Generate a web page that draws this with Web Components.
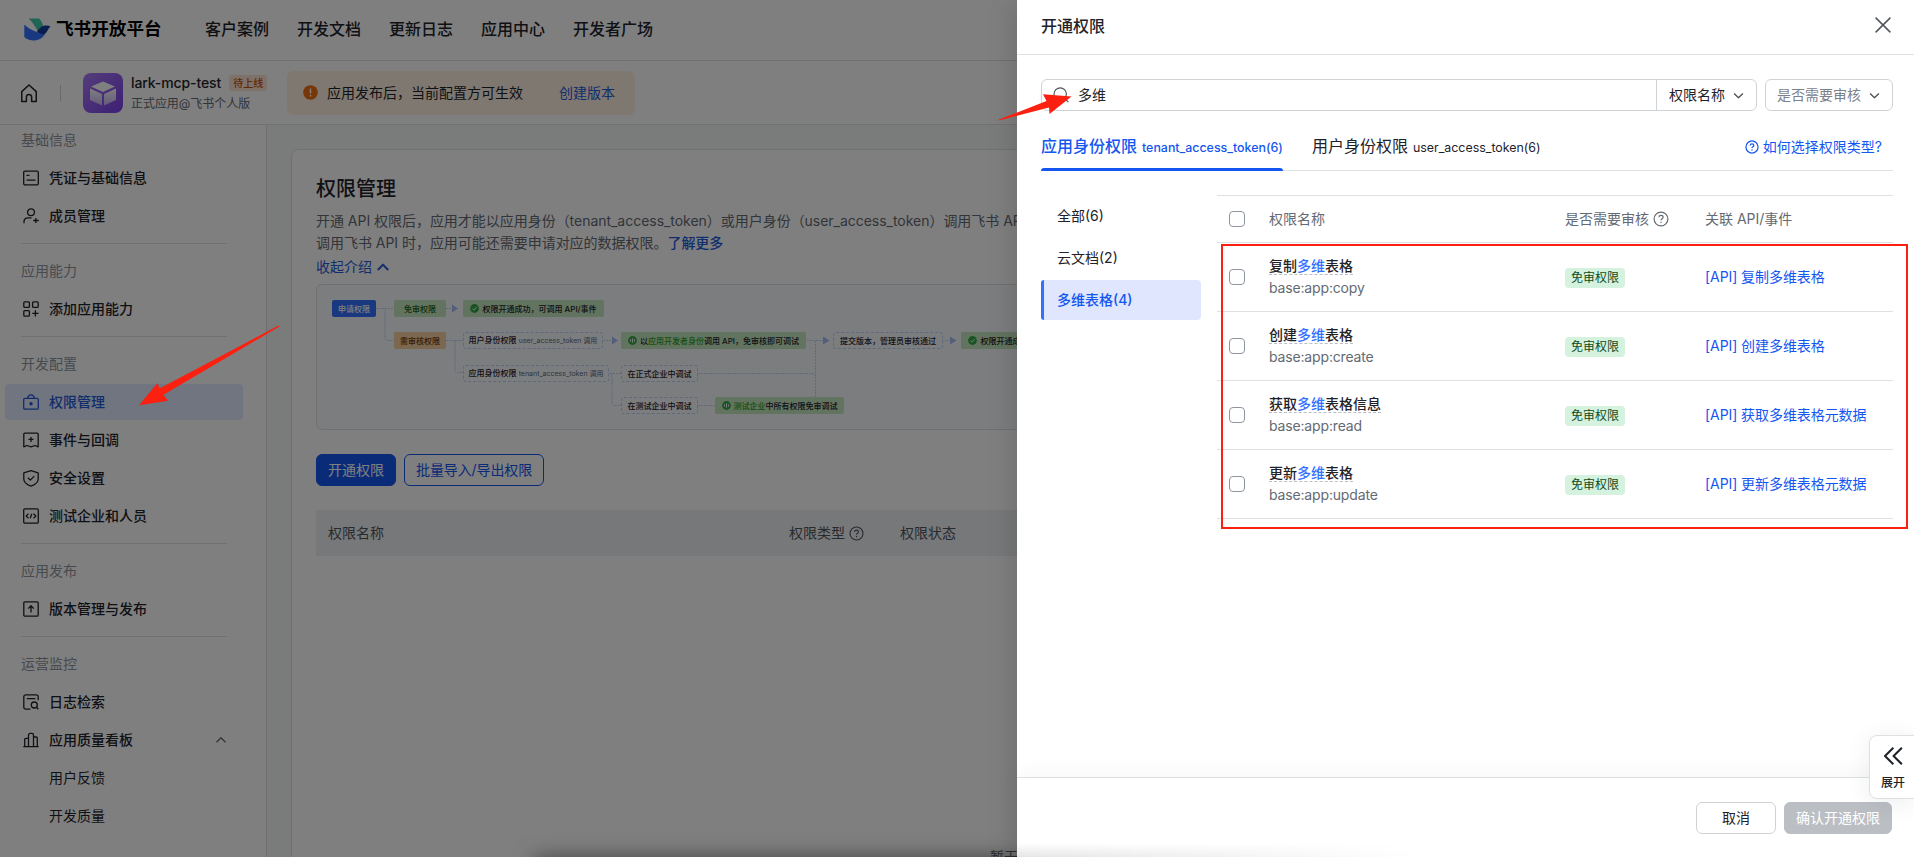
<!DOCTYPE html>
<html lang="zh-CN">
<head>
<meta charset="utf-8">
<title>飞书开放平台</title>
<style>
    html, body {
        margin: 0;
        padding: 0;
        width: 1914px;
        height: 857px;
        overflow: hidden;
        background: #fff;
        font-family: Inter, "Noto Sans CJK SC", sans-serif;
        font-size: 14px;
        line-height: 22px;
        color: #1f2329;
    }
</style>
</head>
<body>
<dev-console></dev-console>
<perm-drawer></perm-drawer>
<mark-arrows></mark-arrows>

<script>
const ICONS = {
    home: `<path d="M2.2 6.9 8 1.6l5.800 5.300v7.900h-3.700v-3.600a2.100 2.100 0 0 0-4.200 0v3.600H2.200z"/>`,
    card: `<rect x=".7" y="1.2" width="14.600" height="13.600" rx="1.200"/><path d="M3.500 5.300h3M3.500 10.200h9"/>`,
    member: `<circle cx="8" cy="4.200" r="3.400"/><path d="M1 15.300v-1.500c0-2.500 1.700-4 4-4h3.500M12.800 10v5M10.300 12.500h5.400"/>`,
    apps: `<rect x=".8" y=".8" width="5.600" height="5.600" rx="1"/><rect x="9.600" y=".8" width="5.600" height="5.600" rx="1"/><rect x=".8" y="9.600" width="5.600" height="5.600" rx="1"/><path d="M12.400 9.300v6.200M9.300 12.400h6.200"/>`,
    lock: `<rect x=".7" y="4.300" width="14.600" height="10.800" rx="1.200"/><path d="M4.600 4.200C5 1.900 6.200.9 8 .9s3 1 3.400 3.300"/><circle cx="8" cy="9.700" r="1.100" fill="currentColor"/>`,
    event: `<path d="M.8 14.800V2.200c0-.6.4-1 1-1h12.400c.6 0 1 .4 1 1v12.600l-3.200-1.300-4 1.300-4-1.300zM8 4.900v5M5.500 7.400h5"/>`,
    shield: `<path d="M8 .6l7.200 2.300v6c0 3.300-3.300 5.700-7.200 7.200C4.100 14.600.8 12.200.8 8.900v-6zM4.900 7.800l2.400 2.300 4-4"/>`,
    code: `<rect x=".7" y=".9" width="14.600" height="14.200" rx="1.200"/><path d="M5.500 5.600 3.200 8l2.300 2.400M10.500 5.600 12.800 8l-2.300 2.400M8.800 5.800 7.200 10.200"/>`,
    publish: `<rect x=".8" y=".8" width="14.400" height="14.400" rx="1.200"/><path d="M8 11.500v-6.500M5.200 7.600 8 4.800l2.800 2.800"/>`,
    search_log: `<path d="M7.500 15.200H2.800a2 2 0 0 1-2-2V2.800a2 2 0 0 1 2-2h10.400a2 2 0 0 1 2 2v3.400M3.800 4.600h8.600"/><circle cx="11.300" cy="11" r="3"/><path d="M13.500 13.200l1.800 2"/>`,
    chart: `<path d="M.3 14.700h15.400M1.700 14.500V7.400a1 1 0 0 1 1-1h2.600M5.500 14.500V3a1.600 1.600 0 0 1 1.600-1.600h1.800A1.600 1.600 0 0 1 10.500 3v11.500M10.700 5h2.600a1 1 0 0 1 1 1v8.500"/>`,
    up: `<path d="M3.500 10.300 8 5.800l4.500 4.500"/>`,
    fold: `<path d="M2.800 11 8 5.600l5.200 5.400"/>`,
    down: `<path d="M3.300 5.800 8 10.500l4.700-4.700"/>`,
    help: `<circle cx="8" cy="8" r="6.900"/><path d="M5.900 6.300c.1-1.200.9-1.900 2.100-1.900s2.100.7 2.100 1.800c0 1.500-2.100 1.500-2.100 3M8 10.700v1.300"/>`,
    search: `<circle cx="7.200" cy="7" r="6.200"/><path d="M11.700 11.500l3.700 3.700"/>`,
    close: `<path d="M.6.600l14.800 14.800M15.400.600.6 15.400"/>`,
    expand: `<path d="M8.300.600.900 8l7.400 7.400M15.900.600 8.500 8l7.400 7.400"/>`
};

class UiIcon extends HTMLElement {
    constructor() {
        super();
        this.shadowDOM = this.attachShadow({mode: "open"});
    }

    connectedCallback() {
        const size = this.getAttribute("size") || 16;
        const stroke = this.getAttribute("stroke") || 1.3;
        this.shadowDOM.innerHTML = `
        <style>
            :host { display: inline-block; flex: none; width: ${size}px; height: ${size}px; }
            svg { display: block; overflow: visible; }
        </style>
        <svg width="${size}" height="${size}" viewBox="0 0 16 16" fill="none" stroke="currentColor" stroke-width="${stroke}" stroke-linejoin="round">${ICONS[this.getAttribute("name")]}</svg>
        `;
    }
}
customElements.define("ui-icon", UiIcon);

class TopNav extends HTMLElement {
    constructor() {
        super();
        const links = ["客户案例", "开发文档", "更新日志", "应用中心", "开发者广场"];
        this.attachShadow({mode: "open"}).innerHTML = `
        <style>
            :host {
                display: flex;
                align-items: center;
                box-sizing: border-box;
                height: 61px;
                padding: 0 0 2px 24px;
                border-bottom: 1px solid #dee0e3;
            }
            .brand { width: 105px; margin: 0 44px 0 5px; font-size: 17.600px; font-weight: 700; color: #000; white-space: nowrap; }
            nav { display: flex; gap: 28px; font-size: 16px; font-weight: 500; }
        </style>
        <svg width="27" height="23" viewBox="0 0 27 23">
            <path d="M4.500.500h10.500c2 1.900 3.500 4.500 4.200 7.500l-5.400 5.200C11.500 8.500 8.500 4 4.500.500z" fill="#3fc9a8"/>
            <path d="M.3 6.500c4 3.800 9.400 7.300 14.700 7.700 4.200.2 6.700-1.700 8.500-3.900C21.600 17.500 17 22.500 10 22.500c-4.200 0-7.600-1.400-9.700-3.500z" fill="#3370ff"/>
            <path d="M13 13.600c1.900-2.700 4.300-5.600 7.800-6.100 2-.3 4 0 5.700.7-2 1.600-2.500 4.500-4.500 6.500-2.300 2.200-6 1.500-9-1.100z" fill="#133c9a"/>
        </svg>
        <div class="brand">飞书开放平台</div>
        <nav>${links.map(l => `<span>${l}</span>`).join("")}</nav>
        `;
    }
}
customElements.define("top-nav", TopNav);

class AppBar extends HTMLElement {
    constructor() {
        super();
        this.attachShadow({mode: "open"}).innerHTML = `
        <style>
            :host {
                display: flex;
                align-items: center;
                box-sizing: border-box;
                height: 64px;
                padding-left: 19px;
                border-bottom: 1px solid #dee0e3;
            }
            .line { width: 1px; height: 16px; margin: 0 22px 0 21px; background: #d0d3d6; }
            .logo { display: block; margin-right: 8px; }
            .info { width: 156px; }
            .name { display: flex; align-items: center; gap: 8px; height: 22px; font-size: 14px; font-weight: 500; letter-spacing: -.1px; white-space: nowrap; }
            .tag { padding: 0 4px; height: 16px; line-height: 16px; border-radius: 3px; background: #fde3d3; color: #c4500a; font-size: 10px; letter-spacing: 0; }
            .sub { font-size: 12px; line-height: 20px; color: #646a73; letter-spacing: -.05px; white-space: nowrap; }
            .notice { display: flex; align-items: center; box-sizing: border-box; width: 348px; height: 44px; padding: 0 20px 0 16px; border-radius: 6px; background: #fff0e0; }
            .notice svg { margin-right: 9px; }
            .notice b { margin-left: auto; font-weight: 400; color: #245bdb; }
        </style>
        <ui-icon name="home" size="20" stroke="1.200"></ui-icon>
        <div class="line"></div>
        <svg class="logo" width="40" height="40" viewBox="0 0 40 40">
            <defs>
                <linearGradient id="bg" x1="0" y1="0" x2="1" y2="1"><stop offset="0" stop-color="#a97bf5"/><stop offset="1" stop-color="#7a3fe8"/></linearGradient>
                <linearGradient id="side" x1="0" y1="0" x2="0" y2="1"><stop offset="0" stop-color="#fff"/><stop offset="1" stop-color="#c9b1f7"/></linearGradient>
            </defs>
            <rect width="40" height="40" rx="8" fill="url(#bg)"/>
            <path d="M20 8.500l12 5-12 5.500-12-5.500z" fill="#fff"/>
            <path d="M7 15.500l12 5.500v11.500l-12-5.500zM33 15.500l-12 5.500v11.500l12-5.500z" fill="url(#side)"/>
        </svg>
        <div class="info">
            <div class="name">lark-mcp-test<span class="tag">待上线</span></div>
            <div class="sub">正式应用@飞书个人版</div>
        </div>
        <div class="notice">
            <svg width="15" height="15" viewBox="0 0 15 15"><circle cx="7.500" cy="7.500" r="7.300" fill="#ed6d0c"/><path d="M7.500 3.500v5" stroke="#fff" stroke-width="1.500"/><circle cx="7.500" cy="10.700" r=".9" fill="#fff"/></svg>
            <span>应用发布后，当前配置方可生效</span>
            <b>创建版本</b>
        </div>
        `;
    }
}
customElements.define("app-bar", AppBar);

class NavItem extends HTMLElement {
    constructor() {
        super();
        this.shadowDOM = this.attachShadow({mode: "open"});
    }

    connectedCallback() {
        const icon = this.getAttribute("icon");
        this.shadowDOM.innerHTML = `
        <style>
            :host {
                display: flex;
                align-items: center;
                box-sizing: border-box;
                height: 36px;
                margin: 0 23px 0 5px;
                padding: 0 14px 0 18px;
                gap: 10px;
                border-radius: 4px;
                font-weight: 500;
            }
            :host([active]) { background: #e1eaff; color: #245bdb; }
            :host([sub]) { padding-left: 44px; font-weight: 400; }
            .fold { margin-left: auto; color: #646a73; }
        </style>
        ${icon ? `<ui-icon name="${icon}"></ui-icon>` : ""}
        <slot></slot>
        ${this.hasAttribute("fold") ? `<ui-icon class="fold" name="up"></ui-icon>` : ""}
        `;
    }
}
customElements.define("nav-item", NavItem);

class NavGroup extends HTMLElement {
    constructor() {
        super();
        this.shadowDOM = this.attachShadow({mode: "open"});
    }

    connectedCallback() {
        this.shadowDOM.innerHTML = `
        <style>
            :host { display: block; padding-top: 16px; }
            .title { margin: 0 0 9px 21px; height: 22px; color: #8f959e; }
            .items { display: flex; flex-direction: column; gap: 2px; }
            .line { height: 1px; margin: 9px 39px 0 21px; background: #dee0e3; }
            :host(:last-child) .line { display: none; }
        </style>
        <div class="title">${this.getAttribute("label")}</div>
        <div class="items"><slot></slot></div>
        <div class="line"></div>
        `;
    }
}
customElements.define("nav-group", NavGroup);

class SideNav extends HTMLElement {
    constructor() {
        super();
        this.attachShadow({mode: "open"}).innerHTML = `
        <style>
            :host { display: block; box-sizing: border-box; flex: none; width: 267px; height: 732px; overflow: hidden; border-right: 1px solid #dee0e3; }
            .scroll { margin-top: -12px; }
        </style>
        <div class="scroll">
            <nav-group label="基础信息">
                <nav-item icon="card">凭证与基础信息</nav-item>
                <nav-item icon="member">成员管理</nav-item>
            </nav-group>
            <nav-group label="应用能力">
                <nav-item icon="apps">添加应用能力</nav-item>
            </nav-group>
            <nav-group label="开发配置">
                <nav-item icon="lock" active>权限管理</nav-item>
                <nav-item icon="event">事件与回调</nav-item>
                <nav-item icon="shield">安全设置</nav-item>
                <nav-item icon="code">测试企业和人员</nav-item>
            </nav-group>
            <nav-group label="应用发布">
                <nav-item icon="publish">版本管理与发布</nav-item>
            </nav-group>
            <nav-group label="运营监控">
                <nav-item icon="search_log">日志检索</nav-item>
                <nav-item icon="chart" fold>应用质量看板</nav-item>
                <nav-item sub>用户反馈</nav-item>
                <nav-item sub>开发质量</nav-item>
            </nav-group>
        </div>
        `;
    }
}
customElements.define("side-nav", SideNav);

// node of the permission flow; x/y/w are its place on the canvas
class FlowNode extends HTMLElement {
    constructor() {
        super();
        this.shadowDOM = this.attachShadow({mode: "open"});
    }

    connectedCallback() {
        const mark = this.getAttribute("mark");
        const glyph = mark === "ok" ? `<path d="M2.400 4.600l1.500 1.500 2.800-3"/>` : `<path d="M2.500 3.300v2.400M4.500 2.300v4.400M6.500 3.300v2.400"/>`;
        this.shadowDOM.innerHTML = `
        <style>
            :host {
                position: absolute;
                display: flex;
                align-items: center;
                justify-content: center;
                box-sizing: border-box;
                left: ${this.getAttribute("x")}px;
                top: ${this.getAttribute("y")}px;
                width: ${this.getAttribute("w")}px;
                height: 17px;
                gap: 3px;
                border-radius: 2px;
                font-size: 8px;
                line-height: 16px;
                font-weight: 500;
                white-space: nowrap;
            }
            :host([kind=blue]) { background: #3370ff; color: #fff; }
            :host([kind=green]) { background: #c5e6bf; }
            :host([kind=orange]) { background: #f8cfa2; color: #6b3900; }
            :host([kind=box]) { border: 1px dashed #c2d0f7; border-radius: 3px; }
            ::slotted(i) { font-style: normal; color: #2ea121; }
            ::slotted(small) { font-size: 7px; font-weight: 400; color: #646a73; }
        </style>
        ${mark ? `<svg width="9" height="9" viewBox="0 0 9 9" fill="none" stroke="#fff" stroke-width=".9"><circle cx="4.500" cy="4.500" r="4.400" fill="#32a645" stroke="none"/>${glyph}</svg>` : ""}
        <span><slot></slot></span>
        `;
    }
}
customElements.define("flow-node", FlowNode);

class PermFlow extends HTMLElement {
    constructor() {
        super();
        this.attachShadow({mode: "open"}).innerHTML = `
        <style>
            :host { display: block; position: relative; box-sizing: border-box; height: 146px; border: 1px solid #dee0e3; border-radius: 6px; background: #f8faff; overflow: hidden; }
            svg { display: block; }
        </style>
        <svg width="1500" height="144" viewBox="317 285 1500 144" fill="none" stroke="#c2d0f7">
            <g stroke-dasharray="2 1">
                <path d="M376 308.500h18M385 308.500v29q0 3 3 3h6M446 308.500h6M446 340.500h17M455 340.500v29q0 3 3 3h5M603 340.500h8M610 373.500h11M612 373.500v29q0 3 3 3h6M698 373.500h117M698 405.500h17M815.500 341v56M807 340.500h16M943 340.500h8"/>
            </g>
            <g fill="#a9bdf5" stroke="none">
                <path d="M452 304.500l6 4-6 4zM612 336.500l6 4-6 4zM823 336.500l6.500 4-6.500 4zM950 336.500l6.500 4-6.500 4z"/>
            </g>
        </svg>
        <flow-node kind="blue" x="15" y="15" w="44">申请权限</flow-node>
        <flow-node kind="green" x="77" y="15" w="52" style="color:#186010">免审权限</flow-node>
        <flow-node kind="green" x="146" y="15" w="141" mark="ok">权限开通成功，可调用 API/事件</flow-node>
        <flow-node kind="orange" x="77" y="47" w="52">需审核权限</flow-node>
        <flow-node kind="box" x="146" y="47" w="140">用户身份权限 <small>user_access_token 调用</small></flow-node>
        <flow-node kind="green" x="304" y="47" w="185" mark="dev">以<i>应用开发者身份</i>调用 API，免审核即可调试</flow-node>
        <flow-node kind="box" x="516" y="47" w="110">提交版本，管理员审核通过</flow-node>
        <flow-node kind="green" x="644" y="47" w="141" mark="ok">权限开通成功，可调用 API/事件</flow-node>
        <flow-node kind="box" x="146" y="80" w="146">应用身份权限 <small>tenant_access_token 调用</small></flow-node>
        <flow-node kind="box" x="304" y="80" w="77">在正式企业中调试</flow-node>
        <flow-node kind="box" x="304" y="112" w="77">在测试企业中调试</flow-node>
        <flow-node kind="green" x="398" y="112" w="129" mark="dev"><i>测试企业</i>中所有权限免审调试</flow-node>
        `;
    }
}
customElements.define("perm-flow", PermFlow);

class PermPage extends HTMLElement {
    constructor() {
        super();
        this.attachShadow({mode: "open"}).innerHTML = `
        <style>
            :host { display: block; flex: 1; min-width: 0; padding: 24px 24px 0; background: #f5f8f8; }
            .card { box-sizing: border-box; height: 900px; padding: 24px 24px 0; border: 1px solid #dee0e3; border-radius: 8px; background: #fff; }
            h1 { margin: 0 0 6px; font-size: 20px; line-height: 30px; font-weight: 500; }
            p { margin: 0; width: 720px; color: #646a73; white-space: nowrap; letter-spacing: -.03px; }
            a { color: #245bdb; font-weight: 500; }
            .fold { display: flex; align-items: center; gap: 3px; height: 26px; margin-bottom: 4px; color: #245bdb; }
            .actions { display: flex; gap: 8px; margin: 24px 0; }
            .actions span { box-sizing: border-box; height: 32px; padding: 0 11px; line-height: 30px; border: 1px solid #1456f0; border-radius: 6px; color: #1456f0; letter-spacing: -.1px; }
            .actions .primary { background: #1456f0; color: #fff; letter-spacing: 0; }
            .head { display: grid; grid-template-columns: 461px 111px 300px; align-items: center; height: 46px; padding-left: 12px; background: #eff0f3; color: #51565d; }
            .head div { display: flex; align-items: center; gap: 4px; }
            .empty { margin: 290px 0 0 674px; color: #646a73; }
        </style>
        <div class="card">
            <h1>权限管理</h1>
            <p>开通 API 权限后，应用才能以应用身份（tenant_access_token）或用户身份（user_access_token）调用飞书 API。<br>调用飞书 API 时，应用可能还需要申请对应的数据权限。<a>了解更多</a></p>
            <div class="fold">收起介绍 <ui-icon name="fold" size="16" stroke="2"></ui-icon></div>
            <perm-flow></perm-flow>
            <div class="actions"><span class="primary">开通权限</span><span>批量导入/导出权限</span></div>
            <div class="head"><div>权限名称</div><div>权限类型 <ui-icon name="help" size="15" stroke="1.200"></ui-icon></div><div>权限状态</div></div>
            <div class="empty">暂无</div>
        </div>
        `;
    }
}
customElements.define("perm-page", PermPage);

class DevConsole extends HTMLElement {
    constructor() {
        super();
        this.attachShadow({mode: "open"}).innerHTML = `
        <style>
            :host { display: block; position: relative; height: 857px; overflow: hidden; }
            .body { display: flex; }
            .mask { position: absolute; inset: 0; background: rgba(0, 0, 0, .5); }
            .shade { position: absolute; left: 535px; top: 859px; width: 840px; height: 20px; box-shadow: 0 0 22px rgba(0, 0, 0, .55); }
        </style>
        <top-nav></top-nav>
        <app-bar></app-bar>
        <div class="body"><side-nav></side-nav><perm-page></perm-page></div>
        <div class="mask"></div>
        <div class="shade"></div>
        `;
    }
}
customElements.define("dev-console", DevConsole);

class CheckBox extends HTMLElement {
    constructor() {
        super();
        this.attachShadow({mode: "open"}).innerHTML = `
        <style>
            :host { display: block; box-sizing: border-box; width: 16px; height: 16px; border: 1px solid #8f959e; border-radius: 4px; background: #fff; }
        </style>
        `;
    }
}
customElements.define("check-box", CheckBox);

class PermRow extends HTMLElement {
    constructor() {
        super();
        this.shadowDOM = this.attachShadow({mode: "open"});
    }

    set scope(scope) {
        this._scope = scope;
        this.render();
    }

    render() {
        const name = this._scope.name.replace("多维", "<em>多维</em>");
        this.shadowDOM.innerHTML = `
        <style>
            :host {
                display: grid;
                grid-template-columns: 40px 296px 140px 1fr;
                align-items: center;
                box-sizing: border-box;
                height: 69px;
                padding-left: 12px;
                border-bottom: 1px solid #dee0e3;
            }
            .name { display: inline-block; height: 19px; line-height: 22px; border-bottom: 1px dashed #bbbfc4; font-weight: 500; vertical-align: top; }
            em { font-style: normal; color: #3370ff; }
            .key { color: #646a73; letter-spacing: -.16px; }
            .tag { display: inline-block; height: 20px; margin-top: 2px; padding: 0 6px; line-height: 20px; border-radius: 4px; background: #d5f2de; color: #104a1c; font-size: 12px; vertical-align: top; }
            .api { color: #1456f0; letter-spacing: -.07px; }
        </style>
        <check-box></check-box>
        <div><span class="name">${name}</span><div class="key">${this._scope.key}</div></div>
        <div><span class="tag">免审权限</span></div>
        <div class="api">[API] ${this._scope.api}</div>
        `;
    }
}
customElements.define("perm-row", PermRow);

class PermTable extends HTMLElement {
    constructor() {
        super();
        const root = this.attachShadow({mode: "open"});
        root.innerHTML = `
        <style>
            :host { display: block; position: relative; flex: 1; }
            .head {
                display: grid;
                grid-template-columns: 40px 296px 140px 1fr;
                align-items: center;
                height: 46px;
                padding-left: 12px;
                border-top: 1px solid #dee0e3;
                border-bottom: 1px solid #dee0e3;
                color: #646a73;
            }
            .head div { display: flex; align-items: center; gap: 4px; }
            .frame { position: absolute; left: 4px; top: 49px; width: 683px; height: 281px; border: 2px solid #fb2010; }
        </style>
        <div class="head">
            <check-box></check-box>
            <div>权限名称</div>
            <div>是否需要审核 <ui-icon name="help" stroke="1.200"></ui-icon></div>
            <div>关联 API/事件</div>
        </div>
        <div class="rows"></div>
        <div class="frame"></div>
        `;
        [
            {name: "复制多维表格", key: "base:app:copy", api: "复制多维表格"},
            {name: "创建多维表格", key: "base:app:create", api: "创建多维表格"},
            {name: "获取多维表格信息", key: "base:app:read", api: "获取多维表格元数据"},
            {name: "更新多维表格", key: "base:app:update", api: "更新多维表格元数据"}
        ].forEach(scope => {
            const row = document.createElement("perm-row");
            row.scope = scope;
            root.querySelector(".rows").appendChild(row);
        });
    }
}
customElements.define("perm-table", PermTable);

class PermFilter extends HTMLElement {
    constructor() {
        super();
        this.attachShadow({mode: "open"}).innerHTML = `
        <style>
            :host { display: flex; gap: 8px; height: 32px; }
            .box { display: flex; align-items: center; box-sizing: border-box; border: 1px solid #d0d3d6; border-radius: 6px; }
            .search { width: 716px; }
            .input { display: flex; flex: 1; align-items: center; gap: 9px; padding-left: 11px; }
            .input ui-icon { color: #51565d; }
            .by { display: flex; align-items: center; box-sizing: border-box; width: 100px; height: 30px; padding-left: 12px; gap: 6px; border-left: 1px solid #d0d3d6; }
            .review { width: 128px; padding-left: 11px; gap: 6px; color: #7b818a; }
            .by ui-icon, .review ui-icon { color: #51565d; }
        </style>
        <div class="box search">
            <div class="input"><ui-icon name="search" stroke="1.200"></ui-icon>多维</div>
            <div class="by">权限名称 <ui-icon name="down" size="15" stroke="1.500"></ui-icon></div>
        </div>
        <div class="box review">是否需要审核 <ui-icon name="down" size="15" stroke="1.500"></ui-icon></div>
        `;
    }
}
customElements.define("perm-filter", PermFilter);

class PermTabs extends HTMLElement {
    constructor() {
        super();
        this.attachShadow({mode: "open"}).innerHTML = `
        <style>
            :host { display: flex; align-items: flex-start; box-sizing: border-box; height: 36px; gap: 29px; border-bottom: 1px solid #dee0e3; }
            .tab { display: flex; align-items: baseline; box-sizing: border-box; height: 36px; gap: 5px; font-size: 16px; line-height: 22px; white-space: nowrap; }
            .tab small { font-size: 12.400px; }
            .on { color: #1456f0; font-weight: 500; position: relative; }
            .on::after { content: ""; position: absolute; left: 0; right: 0; bottom: 0; height: 3px; border-radius: 3px 3px 0 0; background: #1456f0; }
            .help { display: flex; align-items: center; gap: 4px; margin: 1px 11px 0 auto; color: #1456f0; }
        </style>
        <div class="tab on">应用身份权限<small>tenant_access_token(6)</small></div>
        <div class="tab">用户身份权限<small>user_access_token(6)</small></div>
        <div class="help"><ui-icon name="help" size="14" stroke="1.400"></ui-icon>如何选择权限类型?</div>
        `;
    }
}
customElements.define("perm-tabs", PermTabs);

class PermDrawer extends HTMLElement {
    constructor() {
        super();
        this.attachShadow({mode: "open"}).innerHTML = `
        <style>
            :host {
                position: absolute;
                top: 0;
                right: 0;
                display: flex;
                flex-direction: column;
                box-sizing: border-box;
                width: 897px;
                height: 857px;
                background: #fff;
                box-shadow: -6px 0 24px rgba(0, 0, 0, .12);
            }
            header { display: flex; align-items: center; justify-content: space-between; box-sizing: border-box; height: 55px; padding: 0 23px 3px 24px; border-bottom: 1px solid #dee0e3; font-size: 16px; font-weight: 500; }
            header ui-icon { color: #51565d; margin-top: -2px; }
            main { flex: 1; padding: 24px 21px 0 24px; }
            perm-tabs { margin: 24px 0; }
            .content { display: flex; gap: 16px; }
            .types { display: flex; flex-direction: column; gap: 2px; width: 160px; margin-top: 1px; }
            .types div { box-sizing: border-box; height: 40px; padding-left: 16px; line-height: 40px; }
            .types .on { padding-left: 13px; border-left: 3px solid #3370ff; border-radius: 3px 4px 4px 3px; background: #e0e6fd; color: #1456f0; font-weight: 500; }
            footer { display: flex; justify-content: flex-end; gap: 8px; box-sizing: border-box; height: 80px; padding: 24px 22px 0 0; border-top: 1px solid #dee0e3; box-shadow: 0 -6px 20px rgba(0, 0, 0, .03); }
            footer span { box-sizing: border-box; width: 80px; height: 32px; line-height: 30px; border: 1px solid #d0d3d6; border-radius: 6px; text-align: center; }
            footer .ok { width: 108px; border-color: #bbbfc4; background: #bbbfc4; color: #fff; }
            .shade { position: absolute; left: 0; bottom: 0; width: 400px; height: 14px; background: linear-gradient(to right, rgba(0, 0, 0, .1), transparent); -webkit-mask-image: linear-gradient(transparent, #000); mask-image: linear-gradient(transparent, #000); }
            .expand {
                position: absolute;
                right: -1px;
                top: 735px;
                display: flex;
                flex-direction: column;
                align-items: center;
                box-sizing: border-box;
                width: 46px;
                height: 64px;
                padding: 11px 0 0 2px;
                gap: 8px;
                border: 1px solid #dee0e3;
                border-radius: 8px 0 0 8px;
                background: #fff;
                box-shadow: 0 4px 24px rgba(31, 35, 41, .08);
                font-size: 12px;
                line-height: 20px;
                font-weight: 500;
            }
        </style>
        <header>开通权限<ui-icon name="close" stroke="1.500"></ui-icon></header>
        <main>
            <perm-filter></perm-filter>
            <perm-tabs></perm-tabs>
            <div class="content">
                <div class="types"><div>全部(6)</div><div>云文档(2)</div><div class="on">多维表格(4)</div></div>
                <perm-table></perm-table>
            </div>
        </main>
        <footer><span>取消</span><span class="ok">确认开通权限</span></footer>
        <div class="shade"></div>
        <div class="expand"><ui-icon name="expand" size="18" stroke="1.800"></ui-icon>展开</div>
        `;
    }
}
customElements.define("perm-drawer", PermDrawer);

class MarkArrows extends HTMLElement {
    constructor() {
        super();
        this.attachShadow({mode: "open"}).innerHTML = `
        <style>
            :host { position: absolute; left: 0; top: 0; display: block; pointer-events: none; }
            svg { display: block; }
        </style>
        <svg width="1914" height="857" fill="#fb2010">
            <path d="M278.500 325.500 159.500 388.500 157.500 383 139 405.300l29-4.500-4.500-6L279.500 326.500z"/>
            <path d="M999 119.500 1046.500 101 1043 94.300l28.500 2.200L1049.500 114l-.5-6.500-50 13z"/>
        </svg>
        `;
    }
}
customElements.define("mark-arrows", MarkArrows);
</script>
</body>
</html>
